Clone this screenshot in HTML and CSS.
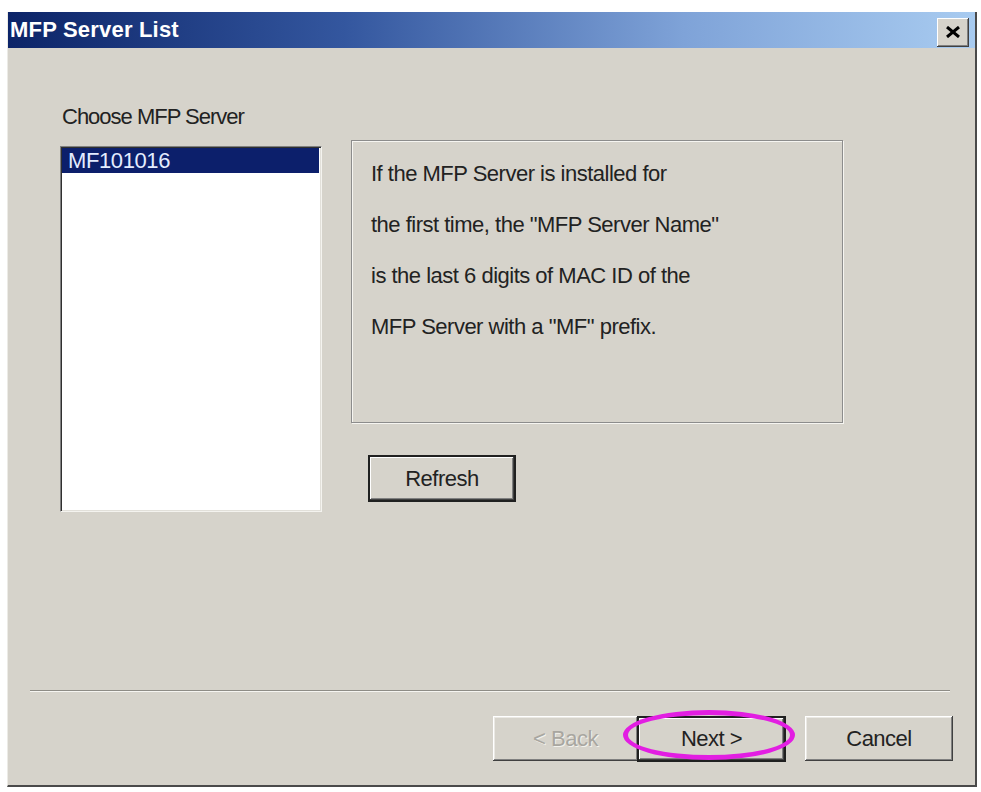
FILE: index.html
```html
<!DOCTYPE html>
<html lang="en">
<head>
<meta charset="UTF-8" />
<meta name="viewport" content="width=device-width, initial-scale=1" />
<title>MFP Server List</title>
<link rel="stylesheet" href="styles.css">
</head>
<body>

<div class="window">
  <div class="titlebar">
    <span class="title">MFP Server List</span>
    <button class="close-btn" aria-label="Close">
      <svg width="14" height="12" viewBox="0 0 14 12">
        <path d="M1 1 L13 11 M13 1 L1 11" stroke="#000" stroke-width="3" />
      </svg>
    </button>
  </div>

  <div class="dialog">
    <div class="main">
      <div class="server-col">
        <div class="label">Choose MFP Server</div>
        <div class="listbox">
          <div class="list-item selected">MF101016</div>
        </div>
      </div>

      <div class="info-col">
        <div class="info-box">
          <p>If the MFP Server is installed for</p>
          <p>the first time, the "MFP Server Name"</p>
          <p>is the last 6 digits of MAC ID of the</p>
          <p>MFP Server with a "MF" prefix.</p>
        </div>
        <button class="btn default refresh">Refresh</button>
      </div>
    </div>

    <div class="footer">
      <div class="separator"></div>
      <div class="buttons">
        <button class="btn back" disabled>&lt; Back</button>
        <button class="btn default next">Next &gt;<span class="highlight"></span></button>
        <button class="btn cancel">Cancel</button>
      </div>
    </div>
  </div>
</div>

</body>
</html>
```

FILE: styles.css
```css
body {
  margin: 0;
  background: #ffffff;
  font-family: 'Liberation Sans', Arial, sans-serif;
  color: #222222;
}
.window {
  margin: 12px 0 0 7px;
  width: 970px;
  height: 775px;
  box-sizing: border-box;
  background: #d6d3cb;
  border-left: 1px solid #ecebe6;
  border-right: 2px solid #4a4a4a;
  border-bottom: 2px solid #4a4a4a;
  display: flex;
  flex-direction: column;
}
.titlebar {
  height: 36px;
  flex-shrink: 0;
  display: flex;
  align-items: center;
  justify-content: space-between;
  padding: 0 6px 0 2px;
  background: linear-gradient(to right, #0c2468 0%, #34579f 35%, #7fa3d8 70%, #a8cbf0 100%);
}
.title {
  color: #ffffff;
  font-weight: bold;
  font-size: 22px;
  letter-spacing: 0.2px;
}
.close-btn {
  width: 32px;
  height: 29px;
  margin-top: 4px;
  padding: 0;
  border: none;
  background: #d6d3cb;
  box-shadow: inset -1px -1px #404040, inset 1px 1px #ffffff, inset -2px -2px #808080;
  display: flex;
  align-items: center;
  justify-content: center;
}
.dialog {
  flex: 1;
  display: flex;
  flex-direction: column;
}
.main {
  display: grid;
  grid-template-columns: 262px 492px;
  column-gap: 29px;
  padding-left: 52px;
}
.label {
  margin-top: 57px;
  font-size: 22px;
  line-height: 24px;
  letter-spacing: -1px;
  padding-left: 2px;
}
.listbox {
  margin-top: 17px;
  height: 366px;
  box-sizing: border-box;
  background: #ffffff;
  border-top: 1px solid #808080;
  border-left: 1px solid #808080;
  border-right: 1px solid #f4f3ef;
  border-bottom: 1px solid #f4f3ef;
  box-shadow: inset 1px 1px #303030, inset -1px -1px #e2e0da;
  padding: 1px 2px 0 1px;
}
.list-item {
  height: 25px;
  line-height: 25px;
  font-size: 22px;
  letter-spacing: -0.4px;
  padding-left: 6px;
}
.list-item.selected {
  background: #0c1f6b;
  color: #e4ecff;
}
.info-box {
  margin-top: 92px;
  height: 283px;
  box-sizing: border-box;
  border: 1px solid #8c8c8c;
  box-shadow: inset 1px 1px #f6f5f1, 1px 1px #f6f5f1;
  padding: 7px 0 0 19px;
}
.info-box p {
  margin: 0;
  font-size: 22px;
  line-height: 51px;
  letter-spacing: -0.5px;
}
.btn {
  font-family: 'Liberation Sans', Arial, sans-serif;
  font-size: 22px;
  letter-spacing: -0.5px;
  color: #222222;
  background: #d6d3cb;
  border: none;
  padding: 0;
  height: 45px;
  box-shadow: inset -1px -1px #404040, inset 1px 1px #ffffff, inset -2px -2px #808080, inset 2px 2px #ebe9e4;
}
.btn.default {
  outline: 2px solid #202020;
  outline-offset: -2px;
  box-shadow: inset -3px -3px #404040, inset 3px 3px #ffffff, inset -4px -4px #808080;
}
.refresh {
  margin: 32px 0 0 17px;
  width: 148px;
  height: 47px;
}
.footer {
  margin-top: auto;
  padding-bottom: 23px;
}
.separator {
  margin: 0 25px 0 22px;
  border-top: 1px solid #8e8c86;
  border-bottom: 1px solid #f6f5f1;
}
.buttons {
  display: flex;
  justify-content: flex-end;
  padding-right: 22px;
  margin-top: 24px;
}
.back {
  width: 145px;
  color: #a8a6a0;
  text-shadow: 1px 1px #f2f1ec;
}
.next {
  position: relative;
  width: 149px;
  height: 46px;
  margin-left: -1px;
}
.cancel {
  width: 148px;
  margin-left: 19px;
}
.highlight {
  position: absolute;
  left: -14px;
  top: -6px;
  width: 172px;
  height: 50px;
  box-sizing: border-box;
  border: 5px solid #e21ee2;
  border-radius: 50%;
}
```
